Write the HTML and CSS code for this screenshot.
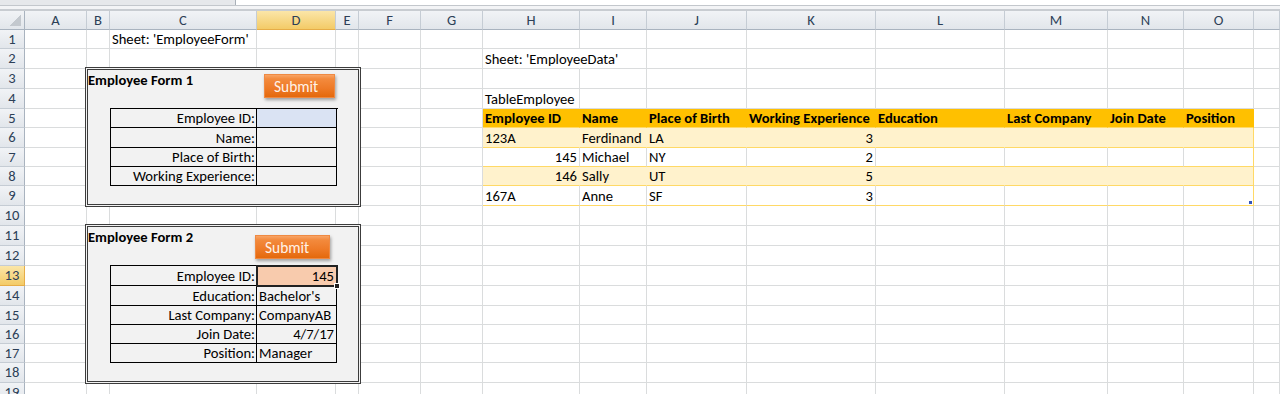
FILE: index.html
```html
<!DOCTYPE html>
<html lang="en">
<head>
    <meta charset="UTF-8">
    <meta name="viewport" content="width=device-width, initial-scale=1.0">
    <title>EmployeeForm</title>
    <link rel="stylesheet" href="styles.css">
</head>
<body>
    <div class="topbar"><div class="namebox"></div><div class="formula"></div></div>
    <div class="ribbon-edge"></div>

    <table class="sheet">
        <colgroup>
            <col class="w25"><col class="w62"><col class="w23"><col class="w147"><col class="w79"><col class="w23"><col class="w62"><col class="w62"><col class="w97"><col class="w67"><col class="w100"><col class="w129"><col class="w129"><col class="w103"><col class="w76"><col class="w70"><col class="w26">
        </colgroup>
        <tr class="cols">
            <th class="corner"></th><th>A</th><th>B</th><th>C</th><th class="sel">D</th><th>E</th><th>F</th><th>G</th><th>H</th><th>I</th><th>J</th><th>K</th><th>L</th><th>M</th><th>N</th><th>O</th><th></th>
        </tr>
        <tr class="h19">
            <th>1</th><td></td><td></td><td>Sheet: 'EmployeeForm'</td><td></td><td></td><td></td><td></td><td></td><td></td><td></td><td></td><td></td><td></td><td></td><td></td><td></td>
        </tr>
        <tr class="h20">
            <th>2</th><td></td><td></td><td></td><td></td><td></td><td></td><td></td><td class="spill">Sheet: 'EmployeeData'</td><td></td><td></td><td></td><td></td><td></td><td></td><td></td><td></td>
        </tr>
        <tr class="h20">
            <th>3</th><td></td>
            <td class="form-cell" colspan="4" rowspan="7">
                <div class="form-box">
                    <div class="form-title">Employee Form 1</div>
                    <div class="submit s1">Submit</div>
                    <div class="fields f1">
                        <div class="label">Employee ID:</div><div class="value blue"></div>
                        <div class="label">Name:</div><div class="value"></div>
                        <div class="label">Place of Birth:</div><div class="value"></div>
                        <div class="label">Working Experience:</div><div class="value"></div>
                    </div>
                </div>
            </td>
            <td></td><td></td><td></td><td></td><td></td><td></td><td></td><td></td><td></td><td></td><td></td>
        </tr>
        <tr class="h20">
            <th>4</th><td></td><td></td><td></td><td>TableEmployee</td><td></td><td></td><td></td><td></td><td></td><td></td><td></td><td></td>
        </tr>
        <tr class="h19">
            <th>5</th><td></td><td></td><td></td>
            <td class="hd">Employee ID</td><td class="hd">Name</td><td class="hd">Place of Birth</td><td class="hd">Working Experience</td><td class="hd">Education</td><td class="hd">Last Company</td><td class="hd">Join Date</td><td class="hd last">Position</td><td></td>
        </tr>
        <tr class="h20">
            <th>6</th><td></td><td></td><td></td>
            <td class="band">123A</td><td class="band">Ferdinand</td><td class="band">LA</td><td class="band num">3</td><td class="band"></td><td class="band"></td><td class="band"></td><td class="band last"></td><td></td>
        </tr>
        <tr class="h19">
            <th>7</th><td></td><td></td><td></td>
            <td class="row num">145</td><td class="row">Michael</td><td class="row">NY</td><td class="row num">2</td><td class="row"></td><td class="row"></td><td class="row"></td><td class="row last"></td><td></td>
        </tr>
        <tr class="h19">
            <th>8</th><td></td><td></td><td></td>
            <td class="band num">146</td><td class="band">Sally</td><td class="band">UT</td><td class="band num">5</td><td class="band"></td><td class="band"></td><td class="band"></td><td class="band last"></td><td></td>
        </tr>
        <tr class="h20">
            <th>9</th><td></td><td></td><td></td>
            <td class="row">167A</td><td class="row">Anne</td><td class="row">SF</td><td class="row num">3</td><td class="row"></td><td class="row"></td><td class="row"></td><td class="row last handle"></td><td></td>
        </tr>
        <tr class="h20">
            <th>10</th><td></td><td></td><td></td><td></td><td></td><td></td><td></td><td></td><td></td><td></td><td></td><td></td><td></td><td></td><td></td><td></td>
        </tr>
        <tr class="h20">
            <th>11</th><td></td>
            <td class="form-cell" colspan="4" rowspan="8">
                <div class="form-box tall">
                    <div class="form-title">Employee Form 2</div>
                    <div class="submit s2">Submit</div>
                    <div class="fields f2">
                        <div class="label">Employee ID:</div><div class="value active num">145</div>
                        <div class="label">Education:</div><div class="value">Bachelor's</div>
                        <div class="label">Last Company:</div><div class="value">CompanyAB</div>
                        <div class="label">Join Date:</div><div class="value num">4/7/17</div>
                        <div class="label">Position:</div><div class="value">Manager</div>
                    </div>
                </div>
            </td>
            <td></td><td></td><td></td><td></td><td></td><td></td><td></td><td></td><td></td><td></td><td></td>
        </tr>
        <tr class="h20"><th>12</th><td></td><td></td><td></td><td></td><td></td><td></td><td></td><td></td><td></td><td></td><td></td><td></td></tr>
        <tr class="h20"><th class="sel">13</th><td></td><td></td><td></td><td></td><td></td><td></td><td></td><td></td><td></td><td></td><td></td><td></td></tr>
        <tr class="h20"><th>14</th><td></td><td></td><td></td><td></td><td></td><td></td><td></td><td></td><td></td><td></td><td></td><td></td></tr>
        <tr class="h19"><th>15</th><td></td><td></td><td></td><td></td><td></td><td></td><td></td><td></td><td></td><td></td><td></td><td></td></tr>
        <tr class="h19"><th>16</th><td></td><td></td><td></td><td></td><td></td><td></td><td></td><td></td><td></td><td></td><td></td><td></td></tr>
        <tr class="h19"><th>17</th><td></td><td></td><td></td><td></td><td></td><td></td><td></td><td></td><td></td><td></td><td></td><td></td></tr>
        <tr class="h20"><th>18</th><td></td><td></td><td></td><td></td><td></td><td></td><td></td><td></td><td></td><td></td><td></td><td></td></tr>
        <tr class="h20">
            <th>19</th><td></td><td></td><td></td><td></td><td></td><td></td><td></td><td></td><td></td><td></td><td></td><td></td><td></td><td></td><td></td><td></td>
        </tr>
    </table>
</body>
</html>
```

FILE: styles.css
```css
body {
    margin: 0;
    font-family: Carlito, Lato, "Liberation Sans", sans-serif;
    font-size: 14.6px;
    color: #000;
    background: #fff;
    overflow: hidden;
}
.topbar {
    display: flex;
    height: 5px;
    border-bottom: 1px solid #c3c7cc;
}
.namebox {
    flex: 0 0 235px;
    background: #e6e8eb;
}
.formula {
    flex: 1;
    background: #fff;
    border-left: 1px solid #a9b0b8;
}
.ribbon-edge {
    height: 3px;
    background: #f3f4f6;
    border-bottom: 2px solid #c8ccd1;
}

/* grid */
.sheet {
    border-collapse: separate;
    border-spacing: 0;
    table-layout: fixed;
    width: 1280px;
}
.w25 { width: 25px; }
.w23 { width: 23px; }
.w26 { width: 26px; }
.w62 { width: 62px; }
.w67 { width: 67px; }
.w70 { width: 70px; }
.w76 { width: 76px; }
.w79 { width: 79px; }
.w97 { width: 97px; }
.w100 { width: 100px; }
.w103 { width: 103px; }
.w129 { width: 129px; }
.w147 { width: 147px; }

.sheet td, .sheet th {
    box-sizing: border-box;
    padding: 0 2px;
    border-right: 1px solid #dadcdd;
    border-bottom: 1px solid #dadcdd;
    white-space: nowrap;
    vertical-align: bottom;
    line-height: 17px;
    overflow: visible;
}
.sheet th {
    padding: 0;
    font-weight: normal;
    text-align: center;
    vertical-align: middle;
    color: #2c3f57;
    background: linear-gradient(#f1f3f6, #e2e6eb);
    border-right-color: #c5ccd4;
    border-bottom-color: #c5ccd4;
}
.cols th {
    height: 19px;
    border-bottom-color: #a9b3bf;
}
.sheet tr > th:first-child {
    border-right-color: #a9b3bf;
}
.sheet th.corner {
    background: linear-gradient(135deg, transparent 50%, #c3c8ce 50%) no-repeat right 3px bottom 3px / 11px 11px, linear-gradient(#f1f3f6, #e2e6eb);
}
.sheet th.sel {
    background: linear-gradient(#fbe6a8, #f3cb67);
    border-bottom-color: #e6ad47;
}
.sheet tr > th.sel:first-child {
    border-right-color: #e6ad47;
}
.h19 > td, .h19 > th { height: 19px; }
.h20 > td, .h20 > th { height: 20px; }

.sheet td.spill { border-right-color: transparent; }
.sheet td.num { text-align: right; }

/* TableEmployee */
.sheet td.hd {
    background: #ffc000;
    font-weight: bold;
    border-right-color: #ffc000;
    border-bottom-color: #ffd966;
}
.sheet td.band {
    background: #fff2cc;
    border-right-color: #fff2cc;
    border-bottom-color: #ffd966;
}
.sheet td.row {
    border-bottom-color: #ffd966;
}
.sheet td.last {
    border-right-color: #ffd966;
}
.sheet td.hd.last {
    border-right-color: #ffc000;
}
.sheet td.handle {
    position: relative;
}
.sheet td.handle::after {
    content: "";
    position: absolute;
    right: 1px;
    bottom: 1px;
    width: 3px;
    height: 3px;
    background: #3355b8;
}

/* forms */
.sheet td.form-cell {
    padding: 0;
    border: none;
    vertical-align: top;
}
.form-box {
    position: relative;
    box-sizing: border-box;
    width: 276px;
    height: 140px;
    margin: -2px -2px -1px -2px;
    border: 3px double #3c3c3c;
    background: #f2f2f2;
}
.form-box.tall {
    height: 160px;
}
.form-title {
    height: 19px;
    line-height: 17px;
    font-weight: bold;
    display: flex;
    align-items: flex-end;
}
.fields {
    display: grid;
    grid-template-columns: 146px 80px;
    width: 227px;
    margin: 19px 0 0 22px;
    border-top: 1px solid #000;
    border-left: 1px solid #000;
}
.f1 { grid-template-rows: 19px 20px 19px 19px; }
.f2 { grid-template-rows: 20px 20px 19px 19px 19px; }
.fields > div {
    display: flex;
    align-items: flex-end;
    padding: 0 2px;
    line-height: 17px;
    white-space: nowrap;
    overflow: hidden;
    border-right: 1px solid #000;
    border-bottom: 1px solid #000;
}
.fields .label {
    justify-content: flex-end;
    padding-right: 1px;
}
.fields .num {
    justify-content: flex-end;
}
.fields .blue {
    background: #dae3f3;
}
.fields .active {
    position: relative;
    overflow: visible;
    background: #f8cbad;
    outline: 2px solid #222;
    outline-offset: -1px;
}
.fields .active::after {
    content: "";
    position: absolute;
    right: -4px;
    bottom: -4px;
    width: 4px;
    height: 4px;
    background: #222;
    border: 1px solid #fff;
}

.submit {
    position: absolute;
    box-sizing: border-box;
    height: 24px;
    padding-left: 9px;
    line-height: 24px;
    color: #fff2e8;
    font-size: 15.4px;
    background: linear-gradient(#f8a466 0%, #f38a3d 18%, #ee7a27 60%, #e4690c 100%);
    border: 1px solid #ef8a43;
    box-shadow: 1px 2px 3px rgba(0, 0, 0, 0.35);
}
.s1 {
    top: 4px;
    left: 176px;
    width: 71px;
}
.s2 {
    top: 8px;
    left: 167px;
    width: 75px;
}
```
